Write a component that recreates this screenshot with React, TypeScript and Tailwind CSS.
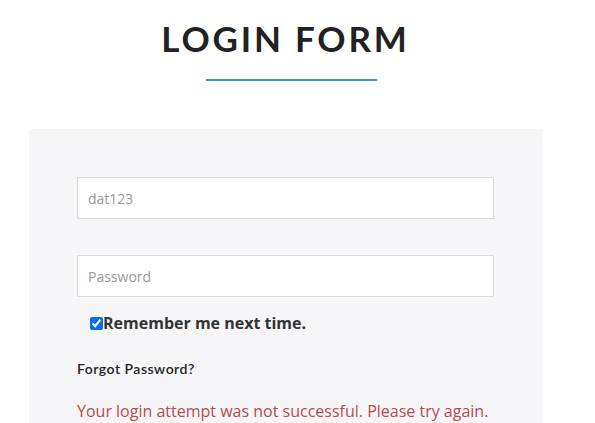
import React from 'react'

export default function App() {
  return (
    <div className="min-h-screen bg-white font-['Open_Sans',sans-serif] overflow-hidden h-[423px]">
      <div className="flex flex-col items-center pt-[18px]">
        <h1 className="text-[35px] leading-[40px] font-bold tracking-[2.8px] text-[#222] font-['Lato',sans-serif] mr-[24px]">
          LOGIN FORM
        </h1>
        <div className="mt-[21px] w-[171px] h-[2px] bg-[#3399cc] mr-[12px]" />
      </div>
      <div className="ml-[29px] mt-[48px] w-[513px] h-[300px] bg-[#f6f6f8] px-[48px] pt-[48px]">
        <input
          className="block w-[417px] h-[42px] border border-[#dadada] bg-white px-[10px] text-[14px] text-[#555] placeholder:text-[#999] outline-none"
          placeholder="dat123"
        />
        <input
          type="password"
          className="block mt-[36px] w-[417px] h-[42px] border border-[#dadada] bg-white px-[10px] text-[14px] text-[#555] placeholder:text-[#999] outline-none"
          placeholder="Password"
        />
        <label className="flex items-center ml-[13px] mt-[17px] h-[18px]">
          <input type="checkbox" defaultChecked className="w-[13px] h-[13px] m-0 accent-[#0b6cf0]" />
          <span className="text-[16px] font-bold text-[#333] leading-[18px]">Remember me next time.</span>
        </label>
        <div className="mt-[26px] text-[14px] font-semibold tracking-[0.5px] text-[#222] font-['Lato',sans-serif]">
          Forgot Password?
        </div>
        <p className="mt-[20px] text-[16px] text-[#b94a48]">
          Your login attempt was not successful. Please try again.
        </p>
      </div>
    </div>
  )
}
